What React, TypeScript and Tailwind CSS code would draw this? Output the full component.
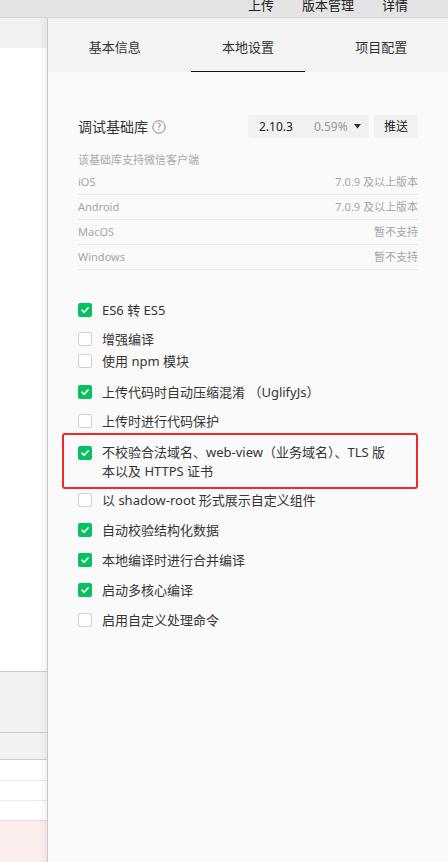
import React from "react";

const font = {
  fontFamily: '"Noto Sans", "Noto Sans CJK SC", sans-serif',
};

type Opt = { label: React.ReactNode; checked: boolean; gap: string };

const options: Opt[] = [
  { label: "ES6 转 ES5", checked: true, gap: "mt-0" },
  { label: "增强编译", checked: false, gap: "mt-[15px]" },
  { label: "使用 npm 模块", checked: false, gap: "mt-[8px]" },
  { label: "上传代码时自动压缩混淆 （UglifyJs）", checked: true, gap: "mt-[17px]" },
  { label: "上传时进行代码保护", checked: false, gap: "mt-[15px]" },
];

const rest: Opt[] = [
  { label: "以 shadow-root 形式展示自定义组件", checked: false, gap: "mt-[4px]" },
  { label: "自动校验结构化数据", checked: true, gap: "mt-[16px]" },
  { label: "本地编译时进行合并编译", checked: true, gap: "mt-[16px]" },
  { label: "启动多核心编译", checked: true, gap: "mt-[16px]" },
  { label: "启用自定义处理命令", checked: false, gap: "mt-[16px]" },
];

function Box({ checked }: { checked: boolean }) {
  if (checked)
    return (
      <span className="w-[14px] h-[14px] shrink-0 rounded-[2px] bg-[#07c160] flex items-center justify-center">
        <svg width="10" height="10" viewBox="0 0 10 10" fill="none">
          <path d="M2 5.2 L4.2 7.3 L8.2 2.8" stroke="#fff" strokeWidth="1.6" strokeLinecap="round" strokeLinejoin="round" />
        </svg>
      </span>
    );
  return <span className="w-[14px] h-[14px] shrink-0 rounded-[2px] bg-white border border-[#cfcfcf]" />;
}

function Check({ o }: { o: Opt }) {
  return (
    <div className={`flex items-center h-[14px] gap-[10px] ${o.gap}`}>
      <Box checked={o.checked} />
      <span className="text-[13px] leading-[14px] text-[#353535] whitespace-nowrap">{o.label}</span>
    </div>
  );
}

const platforms = [
  ["iOS", "7.0.9 及以上版本"],
  ["Android", "7.0.9 及以上版本"],
  ["MacOS", "暂不支持"],
  ["Windows", "暂不支持"],
];

export default function App() {
  return (
    <div style={font} className="w-[448px] h-[862px] overflow-hidden flex flex-col bg-white">
      {/* top toolbar */}
      <div className="h-[18px] shrink-0 bg-[#e4e4e4] border-b border-[#d2d2d2] flex items-end overflow-hidden">
        <div className="flex text-[13px] leading-[13px] text-[#222] ml-[248px] mb-[5px] gap-[28px]">
          <span>上传</span>
          <span>版本管理</span>
          <span>详情</span>
        </div>
      </div>

      <div className="flex flex-1 min-h-0">
        {/* left editor area peeking out */}
        <div className="w-[47px] shrink-0 flex flex-col bg-white relative">
          <div className="h-[30px] bg-[#f1f1f1]" />
          <div className="h-[623px] bg-white" />
          <div className="h-[61px] bg-[#f2f2f2] border-t border-[#cccccc]" />
          <div className="h-[27px] bg-[#f2f2f2] border-t border-[#cccccc]" />
          <div className="h-[21px] bg-white border-t border-[#cccccc]" />
          <div className="h-[20px] bg-white border-t border-[#ebebeb]" />
          <div className="h-[20px] bg-white border-t border-[#ebebeb]" />
          <div className="flex-1 bg-[#fdeeee] border-t border-[#f8d0d0]" />
          <div className="absolute top-0 right-0 bottom-0 w-[8px] bg-gradient-to-r from-transparent to-black/[0.05]" />
        </div>

        {/* settings panel */}
        <div className="flex-1 flex flex-col border-l border-[#c8c8c8] bg-[#fafafa]">
          <div className="h-[54px] shrink-0 bg-[#f3f3f3] grid grid-cols-3 text-[13px] text-[#333]">
            <div className="flex items-center justify-center pt-[6px]">基本信息</div>
            <div className="flex items-center justify-center pt-[6px] relative">
              本地设置
              <span className="absolute bottom-0 left-[10px] right-[10px] h-[1.5px] bg-[#111]" />
            </div>
            <div className="flex items-center justify-center pt-[6px]">项目配置</div>
          </div>

          <div className="px-[30px] pt-[43px]">
            <div className="flex items-center justify-between h-[23px]">
              <div className="flex items-center gap-[4px] text-[14px] text-[#333]">
                调试基础库
                <svg width="14" height="14" viewBox="0 0 14 14" fill="none">
                  <circle cx="7" cy="7" r="6.2" stroke="#777" strokeWidth="0.9" />
                  <text x="7" y="10.2" textAnchor="middle" fontSize="9" fill="#777" fontFamily="Noto Sans, sans-serif">?</text>
                </svg>
              </div>
              <div className="flex items-center gap-[5px]">
                <div className="w-[121px] h-[23px] bg-[#f1f1f1] rounded-[3px] flex items-center pl-[11px] text-[12px]">
                  <span className="text-[#222]">2.10.3</span>
                  <span className="text-[#999] ml-[21px]">0.59%</span>
                  <svg className="ml-[6px]" width="7" height="5" viewBox="0 0 7 5">
                    <path d="M0 0 H7 L3.5 4.5 Z" fill="#333" />
                  </svg>
                </div>
                <div className="w-[44px] h-[23px] bg-[#f1f1f1] rounded-[3px] flex items-center justify-center text-[12px] text-[#222]">
                  推送
                </div>
              </div>
            </div>

            <div className="mt-[15px] text-[11px] leading-[14px] text-[#aaa]">该基础库支持微信客户端</div>
            <div className="mt-[3px]">
              {platforms.map(([k, v]) => (
                <div key={k} className="h-[25px] flex items-center justify-between border-b border-[#e8e8e8] text-[11px] text-[#a5a5a5]">
                  <span>{k}</span>
                  <span>{v}</span>
                </div>
              ))}
            </div>

            <div className="mt-[33px] flex flex-col">
              {options.map((o, i) => (
                <Check key={i} o={o} />
              ))}
            </div>
          </div>

          <div className="ml-[14px] mr-[30px] mt-[5px] border-2 border-[#f52828] rounded-[3px] h-[56px] pl-[14px] pt-[8px] flex gap-[10px]">
            <div className="pt-[3px]">
              <Box checked />
            </div>
            <span className="text-[13px] leading-[19px] text-[#353535]">
              不校验合法域名、web-view（业务域名）、TLS 版
              <br />
              本以及 HTTPS 证书
            </span>
          </div>

          <div className="px-[30px] flex flex-col">
            {rest.map((o, i) => (
              <Check key={i} o={o} />
            ))}
          </div>
        </div>
      </div>
    </div>
  );
}
